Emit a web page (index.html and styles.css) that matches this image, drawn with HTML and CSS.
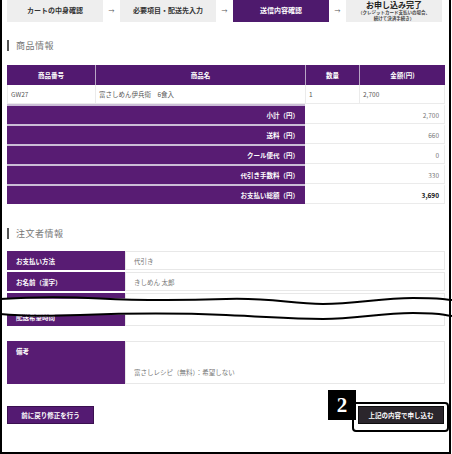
FILE: index.html
```html
<!DOCTYPE html>
<html lang="ja">
<head>
<meta charset="utf-8">
<link rel="stylesheet" href="styles.css">
</head>
<body>
<div class="page">
  <div class="steps">
    <div class="step">カートの中身確認</div>
    <div class="arrow">→</div>
    <div class="step">必要項目・配送先入力</div>
    <div class="arrow">→</div>
    <div class="step active">送信内容確認</div>
    <div class="arrow">→</div>
    <div class="step">
      <span class="step-title">お申し込み完了</span>
      <span class="step-note">（クレジットカード支払いの場合、</span>
      <span class="step-note">続けて決済手続き）</span>
    </div>
  </div>

  <h2 class="heading">商品情報</h2>

  <div class="ptable">
    <div class="th">商品番号</div>
    <div class="th">商品名</div>
    <div class="th">数量</div>
    <div class="th">金額(円)</div>
    <div class="td">GW27</div>
    <div class="td">富さしめん伊兵衛　6食入</div>
    <div class="td">1</div>
    <div class="td">2,700</div>
    <div class="sl">小計（円）</div>
    <div class="sv">2,700</div>
    <div class="sl">送料（円）</div>
    <div class="sv">660</div>
    <div class="sl">クール便代（円）</div>
    <div class="sv">0</div>
    <div class="sl">代引き手数料（円）</div>
    <div class="sv">330</div>
    <div class="sl">お支払い総額（円）</div>
    <div class="sv total">3,690</div>
  </div>

  <h2 class="heading heading-2">注文者情報</h2>

  <div class="info">
    <div class="irow">
      <div class="il">お支払い方法</div>
      <div class="iv">代引き</div>
    </div>
    <div class="irow">
      <div class="il">お名前（漢字）</div>
      <div class="iv">きしめん 太郎</div>
    </div>
    <div class="irow irow-cut">
      <div class="il">配送希望時間</div>
      <div class="iv"></div>
    </div>
    <div class="irow irow-note">
      <div class="il">備考</div>
      <div class="iv">富さしレシピ（無料）：希望しない</div>
    </div>
  </div>

  <div class="actions">
    <button class="btn btn-back">前に戻り修正を行う</button>
    <button class="btn btn-submit">上記の内容で申し込む</button>
  </div>

  <svg class="wave" width="452" height="36" viewBox="0 0 452 36">
    <path d="M0 16.5 C 30 16.5, 60 17, 100 16.5 S 180 17, 226 17 S 290 21.5, 323 21.5 S 380 15.5, 413 15.5 S 440 17, 452 18" fill="none" stroke="#fff" stroke-width="16"/>
    <path d="M0 9 C 30 7, 60 6.5, 100 8.5 S 180 10.5, 226 9 S 290 14, 323 14 S 380 8, 413 8 S 440 9, 452 10" fill="none" stroke="#000" stroke-width="2"/>
    <path d="M0 24 C 20 26, 40 26.5, 80 25 S 180 23, 226 25 S 290 29, 323 29 S 380 23, 413 23 S 440 25, 452 26" fill="none" stroke="#000" stroke-width="2"/>
  </svg>

  <div class="callout"></div>
  <div class="badge">2</div>
  <div class="frame"></div>
</div>
</body>
</html>
```

FILE: styles.css
```css
* { box-sizing: border-box; margin: 0; padding: 0; }
body {
  margin: 0;
  background: #fff;
  font-family: "Noto Sans CJK JP", "Noto Sans", sans-serif;
  color: #666;
}
.page {
  position: relative;
  width: 452px;
  height: 454px;
  overflow: hidden;
  padding: 0 7px;
}
.frame {
  position: absolute;
  left: 0;
  top: 0;
  width: 451px;
  height: 454px;
  border-left: 2px solid #000;
  border-right: 2px solid #000;
  border-bottom: 2px solid #000;
  pointer-events: none;
}

/* steps */
.steps {
  display: flex;
  margin-top: -2px;
  height: 24px;
}
.step {
  width: 96px;
  background: #eeeeee;
  display: flex;
  flex-direction: column;
  align-items: center;
  justify-content: center;
  font-size: 7px;
  font-weight: 700;
  color: #333;
  line-height: 1;
  white-space: nowrap;
}
.step.active {
  background: #4e1a6d;
  color: #fff;
}
.step-title {
  font-size: 8px;
  line-height: 9px;
  color: #222;
}
.step-note {
  font-size: 4.5px;
  line-height: 6px;
  color: #444;
}
.arrow {
  width: 17px;
  display: flex;
  align-items: center;
  justify-content: center;
  font-size: 6px;
  color: #555;
}

/* headings */
.heading {
  margin-top: 18px;
  height: 11px;
  display: flex;
  align-items: center;
  border-left: 2px solid #555;
  padding-left: 7px;
  font-size: 9px;
  font-weight: 400;
  color: #777;
  letter-spacing: 0.5px;
}
.heading-2 {
  margin-top: 24px;
}

/* product table */
.ptable {
  margin-top: 14px;
  display: grid;
  grid-template-columns: 88px 210px 54px 86px;
}
.th {
  height: 20px;
  background: #521970;
  color: #fff;
  font-size: 6.5px;
  font-weight: 700;
  display: flex;
  align-items: center;
  justify-content: center;
  border-left: 1px solid #b9a6c6;
}
.th:first-child { border-left: 0; }
.td {
  height: 19px;
  display: flex;
  align-items: center;
  padding-left: 3px;
  font-size: 6.5px;
  color: #555;
  border-bottom: 1px solid #ebebeb;
  border-left: 1px solid #ebebeb;
}
.td:nth-child(8) { border-right: 1px solid #ebebeb; }
.sl {
  grid-column: 1 / 3;
  height: 20px;
  background: #581c73;
  border-top: 2px solid #cbbdd6;
  color: #fff;
  font-size: 6.5px;
  font-weight: 700;
  display: flex;
  align-items: center;
  justify-content: flex-end;
  padding-right: 6px;
}
.sv {
  grid-column: 3 / 5;
  height: 20px;
  border-top: 2px solid #fff;
  border-bottom: 1px solid #ebebeb;
  border-right: 1px solid #ebebeb;
  display: flex;
  align-items: center;
  justify-content: flex-end;
  padding-right: 5px;
  font-size: 6.5px;
  color: #777;
}
.sv.total {
  color: #111;
  font-weight: 700;
}

/* orderer info */
.info {
  margin-top: 12px;
  display: flex;
  flex-direction: column;
  gap: 2px;
}
.irow {
  display: flex;
  height: 19px;
}
.il {
  width: 118px;
  background: #581c73;
  color: #fff;
  font-size: 6.5px;
  font-weight: 700;
  display: flex;
  align-items: center;
  padding-left: 9px;
}
.iv {
  flex: 1;
  border: 1px solid #e8e8e8;
  display: flex;
  align-items: center;
  padding-left: 8px;
  font-size: 6.5px;
  color: #777;
}
.irow-cut {
  height: 33px;
}
.irow-cut .il {
  align-items: flex-end;
  padding-bottom: 4px;
}
.irow-note {
  height: 43px;
  margin-top: 13px;
}
.irow-note .il {
  align-items: flex-start;
  padding-top: 5px;
}
.irow-note .iv {
  align-items: flex-end;
  padding-bottom: 6px;
}

/* actions */
.actions {
  margin-top: 22px;
  display: flex;
  justify-content: space-between;
  padding-right: 1px;
}
.btn {
  height: 18px;
  font-family: "Noto Sans CJK JP", sans-serif;
  font-size: 6.5px;
  font-weight: 700;
  color: #fff;
  cursor: pointer;
}
.btn-back {
  width: 87px;
  background: #541a72;
  border: 1px solid #3a0f50;
}
.btn-submit {
  width: 86px;
  background: #2b262c;
  border: 1px solid #0e0e0e;
}

/* overlays */
.wave {
  position: absolute;
  left: 0;
  top: 290px;
}
.callout {
  position: absolute;
  left: 352px;
  top: 402px;
  width: 97px;
  height: 30px;
  border: 2px solid #000;
  border-radius: 4px;
}
.badge {
  position: absolute;
  left: 328px;
  top: 390px;
  width: 28px;
  height: 30px;
  background: #000;
  color: #fff;
  font-family: "Liberation Serif", serif;
  font-weight: 700;
  font-size: 21px;
  display: flex;
  align-items: center;
  justify-content: center;
}
```
